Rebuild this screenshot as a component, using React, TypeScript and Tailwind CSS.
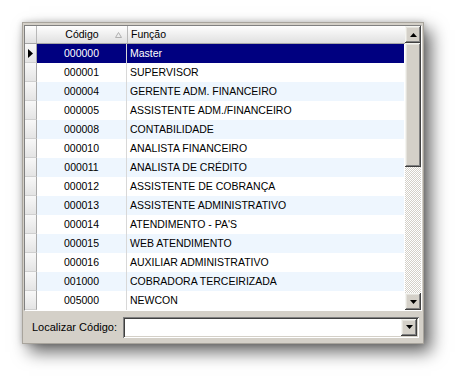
import React from "react";

const rows: [string, string][] = [
  ["000000", "Master"],
  ["000001", "SUPERVISOR"],
  ["000004", "GERENTE ADM. FINANCEIRO"],
  ["000005", "ASSISTENTE ADM./FINANCEIRO"],
  ["000008", "CONTABILIDADE"],
  ["000010", "ANALISTA FINANCEIRO"],
  ["000011", "ANALISTA DE CRÉDITO"],
  ["000012", "ASSISTENTE DE COBRANÇA"],
  ["000013", "ASSISTENTE ADMINISTRATIVO"],
  ["000014", "ATENDIMENTO - PA'S"],
  ["000015", "WEB ATENDIMENTO"],
  ["000016", "AUXILIAR ADMINISTRATIVO"],
  ["001000", "COBRADORA TERCEIRIZADA"],
  ["005000", "NEWCON"],
];

const raised =
  "bg-[#d4d0c8] shadow-[inset_-1px_-1px_#404040,inset_1px_1px_#f4f4f0,inset_-2px_-2px_#808080,inset_2px_2px_#e4e2dc]";

function Arrow({ up }: { up?: boolean }) {
  return (
    <svg width="7" height="4" viewBox="0 0 7 4">
      {up ? <polygon points="0,4 7,4 3.5,0" fill="#000" /> : <polygon points="0,0 7,0 3.5,4" fill="#000" />}
    </svg>
  );
}

export default function App() {
  return (
    <div
      className="w-[470px] h-[387px] bg-white pt-[22px] pl-[22px] text-[10.5px] text-black"
      style={{ fontFamily: '"Liberation Sans", Arial, sans-serif' }}
    >
      <div className="w-[402px] h-[322px] bg-[#d4d0c8] border border-[#a8a49c] px-px pt-[2px] flex flex-col shadow-[7px_8px_16px_rgba(0,0,0,0.6),0_0_6px_rgba(0,0,0,0.2)]">
        {/* grid */}
        <div className="h-[286px] flex border-t border-l border-t-[#808080] border-l-[#808080] border-b border-r border-b-white border-r-white">
          <div className="flex-1 flex flex-col bg-white">
            {/* header */}
            <div className="h-[18px] flex border-b border-[#a6a6a6] bg-[linear-gradient(to_bottom,#fefefe,#ececec_60%,#e0e0e0)]">
              <div className="w-[12px] border-r border-[#b8b8b8]" />
              <div className="w-[91px] relative flex items-center justify-center border-r border-[#b8b8b8] pt-px">
                <span>Código</span>
                <svg className="absolute right-[5px] top-[6px]" width="7" height="6" viewBox="0 0 7 6">
                  <polygon points="0.5,5.5 6.5,5.5 3.5,0.5" fill="none" stroke="#b0b0b0" strokeWidth="1" />
                </svg>
              </div>
              <div className="flex-1 flex items-center pl-[3px] pt-px">Função</div>
            </div>
            {rows.map(([code, name], i) => {
              const sel = i === 0;
              const bg = sel ? "bg-[#000080] text-white" : i % 2 === 0 ? "bg-[#eef6fe]" : "bg-white";
              return (
                <div key={code} className="h-[19px] flex">
                  <div className="w-[12px] flex items-center justify-center border-r border-b border-r-[#a8a8a8] border-b-[#d0d0d0] bg-[linear-gradient(to_bottom,#f8f8f8,#e4e4e4)]">
                    {sel && (
                      <svg width="5" height="9" viewBox="0 0 5 9">
                        <polygon points="0,0 5,4.5 0,9" fill="#000" />
                      </svg>
                    )}
                  </div>
                  <div className={`flex-1 flex ${bg}`}>
                    <div className="w-[90px] flex items-center justify-center border-r border-[#d8d8d8]">{code}</div>
                    <div className="flex-1 flex items-center pl-[3px] border-r border-white">{name}</div>
                  </div>
                </div>
              );
            })}
          </div>
          {/* scrollbar */}
          <div className="w-[16px] flex flex-col">
            <div className={`h-[17px] flex items-center justify-center ${raised}`}>
              <Arrow up />
            </div>
            <div className={`h-[124px] ${raised}`} />
            <div className="flex-1 bg-[repeating-conic-gradient(#d4d0c8_0_25%,#ffffff_0_50%)] bg-[length:2px_2px]" />
            <div className={`h-[17px] flex items-center justify-center ${raised}`}>
              <Arrow />
            </div>
          </div>
        </div>
        {/* bottom panel */}
        <div className="flex-1 flex items-center">
          <span className="ml-[8px] text-[11px]">Localizar Código:</span>
          <div className="ml-auto mr-[3px] w-[296px] h-[21px] bg-white flex justify-end shadow-[inset_1px_1px_#808080,inset_-1px_-1px_#ffffff,inset_2px_2px_#404040,inset_-2px_-2px_#d4d0c8] p-[2px]">
            <div className={`w-[16px] h-[17px] flex items-center justify-center ${raised}`}>
              <Arrow />
            </div>
          </div>
        </div>
      </div>
    </div>
  );
}
